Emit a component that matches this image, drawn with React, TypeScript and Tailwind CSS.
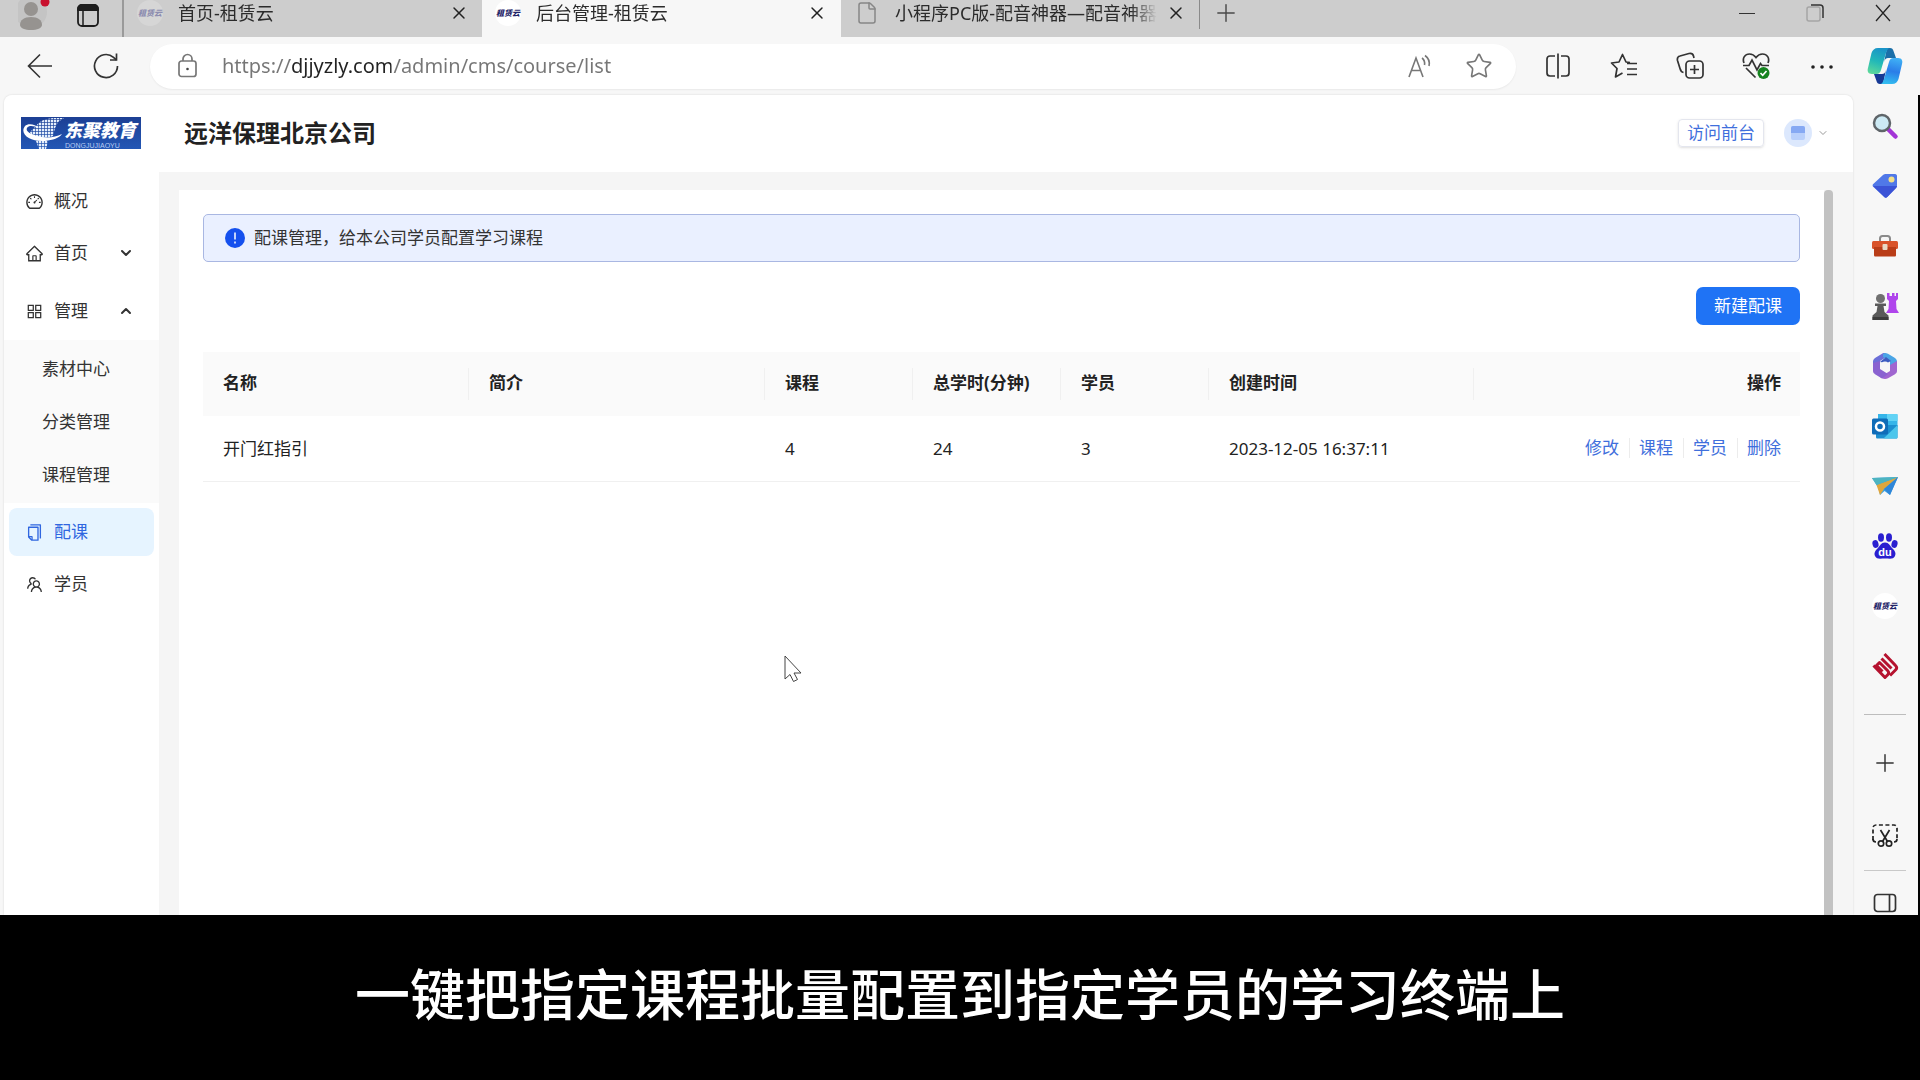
import type { ReactNode } from "react";
import {
  AiOutlineAppstore,
  AiOutlineCopy,
  AiOutlineDashboard,
  AiOutlineHome,
  AiOutlineTeam,
} from "react-icons/ai";
import { ChevronDown, ChevronUp, File, Plus, Star, X } from "lucide-react";

const COLUMNS = [
  { title: "名称", width: "w-[266px]" },
  { title: "简介", width: "w-[296px]" },
  { title: "课程", width: "w-[148px]" },
  { title: "总学时(分钟)", width: "w-[148px]" },
  { title: "学员", width: "w-[148px]" },
  { title: "创建时间", width: "w-[265px]" },
];

const ROWS = [
  {
    name: "开门红指引",
    intro: "",
    courses: 4,
    minutes: 24,
    students: 3,
    created: "2023-12-05 16:37:11",
  },
];

const ACTIONS = ["修改", "课程", "学员", "删除"];

const SUBMENU = ["素材中心", "分类管理", "课程管理"];

function SiteIcon({ faded = false }: { faded?: boolean }) {
  return (
    <svg viewBox="0 0 28 28" className="size-7 shrink-0" aria-hidden="true">
      <circle cx="14" cy="14" r="13" fill={faded ? "#d6d6d6" : "#ffffff"} />
      <text
        x="14"
        y="17"
        textAnchor="middle"
        fontSize="8"
        fontWeight="900"
        fontStyle="italic"
        fontFamily="'Noto Sans CJK SC', sans-serif"
        fill={faded ? "#8d8db0" : "#1f2468"}
      >
        租赁云
      </text>
    </svg>
  );
}

function TitleBar() {
  return (
    <header className="flex h-[37px] overflow-hidden bg-[#cdcdcd] text-[18px] leading-[26px] text-[#2b2b2b]">
      <div className="flex w-[124px] items-center border-r-2 border-[#9a9a9a] pb-1.5 pl-[18px]">
        <button type="button" aria-label="个人资料">
          <svg viewBox="0 0 34 34" className="size-[34px]">
            <circle cx="13" cy="13" r="16" fill="#c4c4c4" />
            <circle cx="13" cy="10" r="7" fill="#969390" />
            <path d="M2 26c0-5 4-8 11-8s11 3 11 8c0 3-5 5-11 5S2 29 2 26z" fill="#969390" />
            <circle cx="27" cy="3" r="4.500" fill="#c8102e" />
          </svg>
        </button>
        <button type="button" aria-label="标签页操作" className="ml-6">
          <svg viewBox="0 0 24 24" className="size-6" fill="none" stroke="#1d1d1d" strokeWidth="1.800">
            <rect x="2" y="1" width="20" height="21" rx="4" />
            <path d="M2 6V5a4 4 0 0 1 4-4h12a4 4 0 0 1 4 4v1z" fill="#1d1d1d" />
            <path d="M7 7v14" strokeWidth="1.500" />
          </svg>
        </button>
      </div>

      <Tab title="首页-租赁云" icon={<SiteIcon faded />} />
      <Tab title="后台管理-租赁云" icon={<SiteIcon />} active />
      <Tab
        title="小程序PC版-配音神器—配音神器"
        icon={<File className="mx-0.5 size-6 shrink-0 text-[#868686]" strokeWidth={1.5} />}
      />

      <div className="flex flex-1 items-center pb-3">
        <span className="h-8 w-px bg-[#8a8a8a]" />
        <button type="button" aria-label="新建标签页" className="ml-3">
          <Plus className="size-7 text-[#4a4a4a]" strokeWidth={1.25} />
        </button>
        <div className="ml-auto flex items-center gap-[44px] pr-[25px]">
          <button type="button" aria-label="最小化">
            <svg viewBox="0 0 24 24" className="size-6" stroke="#333" fill="none">
              <path d="M4 12.500h16" />
            </svg>
          </button>
          <button type="button" aria-label="还原">
            <svg viewBox="0 0 24 24" className="size-6" fill="none">
              <rect x="4" y="6" width="13" height="14" rx="2" stroke="#a5a5a5" strokeWidth="1.500" />
              <path d="M8 4h9a3 3 0 0 1 3 3v10" stroke="#333" strokeWidth="1.500" />
            </svg>
          </button>
          <button type="button" aria-label="关闭窗口">
            <svg viewBox="0 0 24 24" className="size-6" fill="none" stroke="#222" strokeWidth="1.250">
              <path d="M5 4l14 16M19 4L5 20" />
            </svg>
          </button>
        </div>
      </div>
    </header>
  );
}

function Tab({
  title,
  icon,
  active = false,
}: {
  title: string;
  icon: ReactNode;
  active?: boolean;
}) {
  return (
    <div
      className={
        active
          ? "flex w-[359px] items-center bg-[#f7f7f7] pb-3 pl-3"
          : "flex w-[358px] items-center pb-3 pl-3"
      }
    >
      {icon}
      <span className="ml-3.5 w-[262px] overflow-hidden whitespace-nowrap [mask-image:linear-gradient(to_right,black_90%,transparent)]">
        {title}
      </span>
      <button type="button" aria-label={`关闭 ${title}`} className="ml-[9px]">
        <X className="size-5 text-[#222]" strokeWidth={1.75} />
      </button>
    </div>
  );
}

function Toolbar() {
  return (
    <div className="flex h-[58px] items-center pl-[26px] pr-[17px] text-[#333]">
      <button type="button" aria-label="后退">
        <svg viewBox="0 0 28 28" className="size-7" fill="none" stroke="currentColor" strokeWidth="1.600">
          <path d="M26 14H3M14 2.500 2.500 14 14 25.500" />
        </svg>
      </button>
      <button type="button" aria-label="刷新" className="ml-[38px]">
        <svg viewBox="0 0 28 28" className="size-7" fill="none" stroke="currentColor" strokeWidth="1.700">
          <path d="M25.500 14a11.500 11.500 0 1 1-4-8.700L24.500 8" />
          <path d="M24.500 1.500V8H18" />
        </svg>
      </button>

      <div className="ml-[30px] flex h-[45px] flex-1 items-center rounded-full bg-white pl-6 pr-[23px] shadow-[0_1px_2px_rgba(0,0,0,0.06)]">
        <svg viewBox="0 0 26 26" className="size-[26px]" fill="none" stroke="#777" strokeWidth="1.700" aria-hidden="true">
          <rect x="5" y="8" width="17" height="15.500" rx="2.500" />
          <path d="M9 8V6a4.500 4.500 0 0 1 9 0v2" />
          <circle cx="13.500" cy="16" r="1.300" fill="#444" stroke="none" />
        </svg>
        <input
          type="text"
          aria-label="地址栏"
          defaultValue="https://djjyzly.com/admin/cms/course/list"
          className="ml-[22px] min-w-0 flex-1 bg-[linear-gradient(to_right,#767676_68px,#222_68px,#222_169px,#767676_169px)] bg-clip-text text-[20px] text-transparent outline-none"
        />
        <button type="button" aria-label="大声朗读">
          <svg viewBox="0 0 28 28" className="size-7" fill="none" stroke="#777" strokeWidth="1.600">
            <path d="M3 25 10 6l7 19M5.500 18.500h9" />
            <path d="M16 6c2 1.500 3 4 2.500 7M19 3.500c3.500 2.500 5 6 4 10.500" />
          </svg>
        </button>
        <button type="button" aria-label="收藏此页" className="ml-[31px]">
          <Star className="size-7 text-[#777]" strokeWidth={1.4} />
        </button>
      </div>

      <div className="ml-7 flex items-center gap-[38px]">
        <button type="button" aria-label="分屏">
          <svg viewBox="0 0 28 28" className="size-7" fill="none" stroke="currentColor" strokeWidth="1.700">
            <path d="M11 4H6a3 3 0 0 0-3 3v14a3 3 0 0 0 3 3h5M17 4h5a3 3 0 0 1 3 3v14a3 3 0 0 1-3 3h-5M14 1.500v25" />
          </svg>
        </button>
        <button type="button" aria-label="收藏夹">
          <svg viewBox="0 0 28 28" className="size-7" fill="none" stroke="currentColor" strokeWidth="1.700" strokeLinejoin="round">
            <path d="M20 10.500 16 10l-3.500-7.500L9 10l-7.500 1 5.500 5.500L5.500 25l7-4M17 11.500h10M17 17h10M17 22.500h10" />
          </svg>
        </button>
        <button type="button" aria-label="集锦">
          <svg viewBox="0 0 28 28" className="size-7" fill="none" stroke="currentColor" strokeWidth="1.700">
            <rect x="10" y="9" width="17" height="17" rx="3.500" />
            <path d="M18.500 13v9M14 17.500h9M7.500 20.500C5 20 4.500 18.500 4 16.500L1.500 8.500C1 6 2 4.500 4 4l9-2.500c2.500-.5 4 .5 4.500 2.500l.5 2" />
          </svg>
        </button>
        <button type="button" aria-label="浏览器概要">
          <svg viewBox="0 0 28 28" className="size-7" fill="none" stroke="currentColor" strokeWidth="1.700">
            <path d="M2 11C0 6 3 2 7.500 2c3 0 5 1.500 6.500 3.500C15.500 3.500 17.500 2 20.500 2 25 2 28 6 26 11M4 16l9.500 9.500" />
            <path d="M1 13.500h6l3-5.500 5 10 3.500-6.500 1.500 2h7" />
            <circle cx="21.500" cy="21" r="6" fill="#15831f" stroke="none" />
            <path d="m18.500 21 2.200 2.300 3.800-4.300" stroke="#fff" />
          </svg>
        </button>
        <button type="button" aria-label="设置及其他">
          <svg viewBox="0 0 28 28" className="size-7" fill="#222">
            <circle cx="5" cy="15" r="1.800" />
            <circle cx="14" cy="15" r="1.800" />
            <circle cx="23" cy="15" r="1.800" />
          </svg>
        </button>
      </div>
      <button type="button" aria-label="Copilot" className="ml-[31px]">
        <svg viewBox="0 0 36 36" className="size-9">
          <defs>
            <linearGradient id="cpA" x1="0.500" y1="0" x2="0.200" y2="1">
              <stop offset="0" stopColor="#1a94c8" />
              <stop offset="0.500" stopColor="#22b8b8" />
              <stop offset="1" stopColor="#5ed99a" />
            </linearGradient>
            <linearGradient id="cpB" x1="0.600" y1="0" x2="0.400" y2="1">
              <stop offset="0" stopColor="#3fb0f5" />
              <stop offset="0.500" stopColor="#2b7de8" />
              <stop offset="1" stopColor="#33bdf0" />
            </linearGradient>
          </defs>
          <path d="M20 0h3c2 0 3 1 3.500 3l2.500 7h-8c-2 0-3 1-4 4z" fill="#1b6fa8" />
          <path d="M16 36h-3c-2 0-3-1-3.500-3L7 26h8c2 0 3-1 4-4z" fill="#173a96" />
          <path d="M11 0h12c-2 0-3 2-4 5l-5 17c-.8 2.500-2 4-4.500 4H5c-4 0-5-3-4-6L4.500 5C5.500 2 7.500 0 11 0z" fill="url(#cpA)" />
          <path d="M25 36H13c2 0 3-2 4-5l5-17c.8-2.500 2-4 4.500-4H31c4 0 5 3 4 6l-3.500 15c-1 3-3 5-6.500 5z" fill="url(#cpB)" />
        </svg>
      </button>
    </div>
  );
}

function BrandLogo() {
  return (
    <svg viewBox="0 0 120 32" className="h-8 w-[120px]" role="img" aria-label="东聚教育">
      <defs>
        <linearGradient id="brand" x1="0" y1="0" x2="0" y2="1">
          <stop offset="0" stopColor="#1c3f94" />
          <stop offset="1" stopColor="#2357b5" />
        </linearGradient>
        <pattern id="globe" width="3" height="3" patternUnits="userSpaceOnUse">
          <rect width="2.300" height="2.300" fill="#e4eefb" />
        </pattern>
      </defs>
      <rect width="120" height="32" fill="url(#brand)" />
      <path d="M15 9C19 3 27 1 35 1h8l-6 4-3 6-2 8-8 3 3 3-2 7h-7l-3-8-4-4-2-5z" fill="url(#globe)" />
      <path d="M4 9c-6 8 5 16 20 15 8-1 14-3 17-7-6 3-13 4-20 3C11 18 4 15 6 11c2-3 7-2 12 0C14 7 7 6 4 9z" fill="#fff" />
      <text x="43" y="20" fontSize="18" fontWeight="900" fontStyle="italic" fontFamily="'Liberation Sans', 'Noto Sans CJK SC', sans-serif" fill="#fff">
        东聚教育
      </text>
      <text x="44" y="31" fontSize="7" fontFamily="'Liberation Sans', sans-serif" fill="#b9cdf2">
        DONGJUJIAOYU
      </text>
    </svg>
  );
}

function PageHeader() {
  return (
    <div className="flex h-[77px] items-center bg-white pb-0.5 pl-[17px] pr-6">
      <BrandLogo />
      <h1 className="ml-[43px] text-[24px] font-bold text-[#222]">远洋保理北京公司</h1>
      <a
        href="#"
        className="ml-auto rounded-sm border border-[#e4e6ee] px-2 text-[17px] leading-[26px] text-[#3f6fdc] shadow-sm"
      >
        访问前台
      </a>
      <button type="button" aria-label="账户菜单" className="ml-5 flex items-center gap-[5px]">
        <svg viewBox="0 0 28 28" className="size-7">
          <circle cx="14" cy="14" r="14" fill="#dce8fd" />
          <rect x="7" y="7" width="14" height="14" rx="2" fill="#b9d0fb" />
          <path d="M7 14V9a2 2 0 0 1 2-2h10a2 2 0 0 1 2 2v5z" fill="#86a9f3" />
        </svg>
        <ChevronDown className="size-3 text-[#999]" />
      </button>
    </div>
  );
}

function MenuItem({
  icon,
  label,
  active = false,
  arrow,
}: {
  icon: ReactNode;
  label: string;
  active?: boolean;
  arrow?: ReactNode;
}) {
  return (
    <a
      href="#"
      className={
        active
          ? "mx-[5px] flex h-12 items-center rounded-lg bg-[#e6f4ff] pl-4 pr-5 text-[#2f66e0]"
          : "mx-[5px] flex h-12 items-center rounded-lg pl-4 pr-5"
      }
    >
      {icon}
      <span className="ml-2.5 flex-1">{label}</span>
      {arrow}
    </a>
  );
}

function SideMenu() {
  return (
    <nav className="flex w-[155px] shrink-0 flex-col gap-1 bg-white pt-[5px] text-[17px] text-[#333]">
      <MenuItem icon={<AiOutlineDashboard className="size-[19px]" />} label="概况" />
      <MenuItem
        icon={<AiOutlineHome className="size-[19px]" />}
        label="首页"
        arrow={<ChevronDown className="size-4" strokeWidth={3} />}
      />
      <div className="pb-px pt-1.5">
        <MenuItem
          icon={<AiOutlineAppstore className="size-[19px]" />}
          label="管理"
          arrow={<ChevronUp className="size-4" strokeWidth={3} />}
        />
        <div className="mt-[5px] flex flex-col gap-[5px] bg-[#fafafa] pb-1 pt-[5px]">
          {SUBMENU.map((label) => (
            <a key={label} href="#" className="flex h-12 items-center pl-[38px]">
              {label}
            </a>
          ))}
        </div>
      </div>
      <MenuItem icon={<AiOutlineCopy className="size-[19px]" />} label="配课" active />
      <MenuItem icon={<AiOutlineTeam className="size-[19px]" />} label="学员" />
    </nav>
  );
}

function CourseTable() {
  return (
    <table className="mt-[27px] w-full table-fixed text-left text-[17px] text-[#222]">
      <thead className="bg-[#fafafa]">
        <tr className="h-16">
          {COLUMNS.map(({ title, width }) => (
            <th key={title} className={`${width} font-bold`}>
              <div className="border-r border-[#f0f0f0] pb-0.5 pl-5 leading-[30px]">{title}</div>
            </th>
          ))}
          <th className="pb-0.5 pr-[19px] text-right font-bold">操作</th>
        </tr>
      </thead>
      <tbody>
        {ROWS.map((row) => (
          <tr key={row.name} className="h-[65px] border-b border-[#f0f0f0]">
            <td className="pl-5">{row.name}</td>
            <td className="pl-5">{row.intro}</td>
            <td className="pl-5">{row.courses}</td>
            <td className="pl-5">{row.minutes}</td>
            <td className="pl-5">{row.students}</td>
            <td className="pl-5">{row.created}</td>
            <td className="pr-[19px]">
              <div className="flex items-center justify-end divide-x divide-[#ececec]">
                {ACTIONS.map((action) => (
                  <a
                    key={action}
                    href="#"
                    className="pl-[9px] pr-2.5 leading-5 text-[#3f6fdc] last:pr-0"
                  >
                    {action}
                  </a>
                ))}
              </div>
            </td>
          </tr>
        ))}
      </tbody>
    </table>
  );
}

function EdgeSidebar() {
  return (
    <aside className="flex w-[67px] shrink-0 flex-col items-center border-r-2 border-black pr-0.5 pt-[17px] text-[#333]">
      <div className="flex flex-col gap-8">
        <SideButton label="搜索">
          <path d="m17 17 7.500 7.500" stroke="#a335d6" strokeWidth="4.500" strokeLinecap="round" />
          <circle cx="11" cy="11" r="8" fill="#cdeaf4" stroke="#5f6569" strokeWidth="2.500" />
        </SideButton>
        <SideButton label="购物">
          <path d="M15 2h9c1.500 0 2 1 2 2v9c0 1-.3 1.600-1 2.300l-8.500 9.500c-1.200 1.200-2.300 1.200-3.500 0L2.500 15c-1.200-1.200-1.200-2.200 0-3.300L12 3c1-.8 1.800-1 3-1z" fill="#5078e8" />
          <path d="M2 14h24c0 1-.3 1.600-1 2.300l-8.500 8.500c-1.200 1.200-2.300 1.200-3.500 0z" fill="#3b53d6" />
          <circle cx="20.500" cy="7.500" r="3" fill="#f3e08a" />
        </SideButton>
        <SideButton label="工具">
          <path d="M9 9V6.500C9 5 10 4 11.500 4h5C18 4 19 5 19 6.500V9" fill="none" stroke="#8b8b8b" strokeWidth="2" />
          <rect x="1" y="9" width="26" height="8" rx="1.500" fill="#d9532a" />
          <path d="M3 15h22v8c0 1-.5 1.500-1.500 1.500h-19C3.500 24.500 3 24 3 23z" fill="#b93d18" />
          <rect x="11.500" y="12" width="5" height="6" rx="1" fill="#e9d9c5" />
        </SideButton>
        <SideButton label="游戏">
          <path d="M16 1h2.500v3H21V1h2.500v3H25V1h2v6l-2 2 .5 8 2.500 4H15l2.500-4 .5-8-2-2z" fill="#b045ec" />
          <circle cx="9.500" cy="6.500" r="4.500" fill="#707070" />
          <path d="M4 11.500h11v2.500h-2.500l1 6 4 3.500V28H1.500v-4.500l4-3.500 1-6H4z" fill="#5a5a5a" />
          <path d="M1.500 25h16v3h-16z" fill="#3c3c3c" />
        </SideButton>
        <SideButton label="Microsoft 365">
          <path d="M14 1c-1 0-2 0-3 .7L4 6C3 6.700 2 8 2 9.500V19l7-4V9l8-5z" fill="#6c6fd8" />
          <path d="m12 2 2-1c1 0 2 .2 3 .8L24 6c1 .7 2 2 2 3.500V17l-7-4V9l-7-4z" fill="#4aa5e6" />
          <path d="M26 9v10c0 1.500-1 2.500-2 3.200l-7 4c-1.500 1-4.500 1-6 0L9 25l10-6v-6z" fill="#a066d0" />
          <path d="M2 19V11l7-2v8l8 5-6 4.500-7-4.300C3 21.500 2 20.500 2 19z" fill="#8a62d0" />
          <path d="m9 10 6-5 5 4-4 2z" fill="#3c5cc0" />
          <circle cx="14" cy="14" r="4.500" fill="#f7f7f7" />
        </SideButton>
        <SideButton label="Outlook">
          <path d="M7 2h18c1 0 1.500.5 1.500 1.500V15H7z" fill="#35b5e9" />
          <path d="M16 2h10.500v7H16z" fill="#62d3f5" />
          <path d="M5 13h21.500v12c0 1-.5 1.500-1.500 1.500H6.500C5.500 26.500 5 26 5 25z" fill="#1c8fd0" />
          <path d="m26.500 13-14 13.500H25c1 0 1.500-.5 1.500-1.500z" fill="#4cc6ec" />
          <rect x="1" y="6.500" width="16" height="16" rx="1.500" fill="#0f6cb8" />
          <circle cx="9" cy="14.500" r="4" fill="none" stroke="#fff" strokeWidth="2.500" />
        </SideButton>
        <SideButton label="Drop">
          <path d="M1 6 27 5 19 23l-5.500-4L9 23l-1.500-7z" fill="#3aa2e4" />
          <path d="M27 5 5.500 13 9 23l4-6z" fill="#e0a63c" />
          <path d="M27 5 13 17l6 6z" fill="#2f86d8" />
          <path d="M1 6 27 5 5.500 13z" fill="#4db4c0" />
        </SideButton>
        <SideButton label="百度">
          <g fill="#2a1fd0">
            <ellipse cx="4.500" cy="12" rx="3" ry="4" transform="rotate(-15 4.500 12)" />
            <ellipse cx="10" cy="5.500" rx="3" ry="4.200" />
            <ellipse cx="18" cy="5.500" rx="3" ry="4.200" />
            <ellipse cx="23.500" cy="12" rx="3" ry="4" transform="rotate(15 23.500 12)" />
            <path d="M14 10.500c4 0 5 3.500 7.500 6 3 3 3.500 5 2.500 7.500-1.500 3.500-5 2.500-10 2.500S5.500 27.500 4 24c-1-2.500-.5-4.500 2.500-7.500C9 14 10 10.500 14 10.500z" />
          </g>
          <text x="14" y="24" textAnchor="middle" fontSize="11" fontWeight="700" fontFamily="'Liberation Sans', sans-serif" fill="#fff">
            du
          </text>
        </SideButton>
        <button type="button" aria-label="租赁云">
          <SiteIcon />
        </button>
        <SideButton label="东聚">
          <g fill="none" stroke="#b5122f" strokeWidth="3" strokeLinejoin="round">
            <path d="m2.500 13.500 11.500 12 2.500-2.500c1.500-1.500 1.500-3 0-4.500L8.500 10.500l-3 3 6 6" />
            <path d="m13.500 2 11 11.500c1.500 1.500 1.500 3 0 4.500L19 23.500" />
            <path d="m10.500 6.500 10 10" />
          </g>
        </SideButton>
      </div>
      <hr className="mt-[34px] w-[42px] border-[#bdbdbd]" />
      <button type="button" aria-label="自定义" className="mt-[34px]">
        <Plus className="size-7" strokeWidth={1.25} />
      </button>
      <button type="button" aria-label="屏幕截图" className="mt-11">
        <svg viewBox="0 0 28 28" className="size-7" fill="none" stroke="#222" strokeWidth="1.700">
          <path d="M2 19V7a3 3 0 0 1 3-3h18a3 3 0 0 1 3 3v12" strokeDasharray="4 2.500" />
          <path d="M2 18c0 2 1 3 3 3M26 18c0 2-1 3-3 3" />
          <path d="m9.500 9 7 11.500M18.500 9l-7 11.500" />
          <circle cx="10" cy="22.500" r="2.700" />
          <circle cx="18" cy="22.500" r="2.700" />
        </svg>
      </button>
      <hr className="mt-[21px] w-[42px] border-[#c9c9c9]" />
      <button type="button" aria-label="隐藏边栏" className="mt-[22px]">
        <svg viewBox="0 0 28 20" className="h-5 w-7" fill="none" stroke="#333" strokeWidth="1.700">
          <rect x="3.500" y="1.500" width="21" height="17" rx="3" />
          <path d="M18.500 1.500v17" />
        </svg>
      </button>
    </aside>
  );
}

function SideButton({ label, children }: { label: string; children: ReactNode }) {
  return (
    <button type="button" aria-label={label}>
      <svg viewBox="0 0 28 28" className="size-7">
        {children}
      </svg>
    </button>
  );
}

export default function App() {
  return (
    <div className="flex min-h-screen flex-col bg-black font-['Noto_Sans','Noto_Sans_CJK_SC',sans-serif]">
      <div className="flex flex-1 flex-col bg-[#f7f7f7]">
        <TitleBar />
        <Toolbar />
        <div className="flex flex-1">
          <div className="ml-1 flex flex-1 flex-col overflow-hidden rounded-t-lg bg-[#f5f5f5] shadow-[0_0_2px_rgba(0,0,0,0.15)]">
            <PageHeader />
            <div className="flex flex-1">
              <SideMenu />
              <main className="relative ml-5 mt-[18px] flex-1 bg-white pl-6 pr-6 pt-6">
                <div
                  role="alert"
                  className="flex h-12 items-center gap-[9px] rounded-[5px] border border-[#a9b7e2] bg-[#eaf0ff] px-[21px] text-[17px] text-[#333]"
                >
                  <svg viewBox="0 0 20 20" className="size-5" aria-hidden="true">
                    <circle cx="10" cy="10" r="10" fill="#1550ee" />
                    <path d="M10 4.500v7M10 13.500v2" stroke="#fff" strokeWidth="1.500" />
                  </svg>
                  配课管理，给本公司学员配置学习课程
                </div>
                <div className="mt-[25px] flex justify-end">
                  <button
                    type="button"
                    className="h-[38px] rounded-[7px] bg-[#1f73f5] px-[18px] text-[17px] text-white"
                  >
                    新建配课
                  </button>
                </div>
                <CourseTable />
                <svg
                  viewBox="0 0 20 28"
                  className="absolute left-[605px] top-[465px] h-7 w-5"
                  aria-hidden="true"
                >
                  <path d="M1 1v23l5-4.500 3.500 7 4-2-3.500-6.500h7z" fill="#fff" stroke="#444" />
                </svg>
              </main>
              <div className="mr-5 mt-[18px] w-[9px] rounded-t-sm bg-[#c2c2c2]" />
            </div>
          </div>
          <EdgeSidebar />
        </div>
      </div>
      <p className="pb-[46px] pt-[39px] text-center text-[55px] font-medium leading-[80px] text-white">
        一键把指定课程批量配置到指定学员的学习终端上
      </p>
    </div>
  );
}
